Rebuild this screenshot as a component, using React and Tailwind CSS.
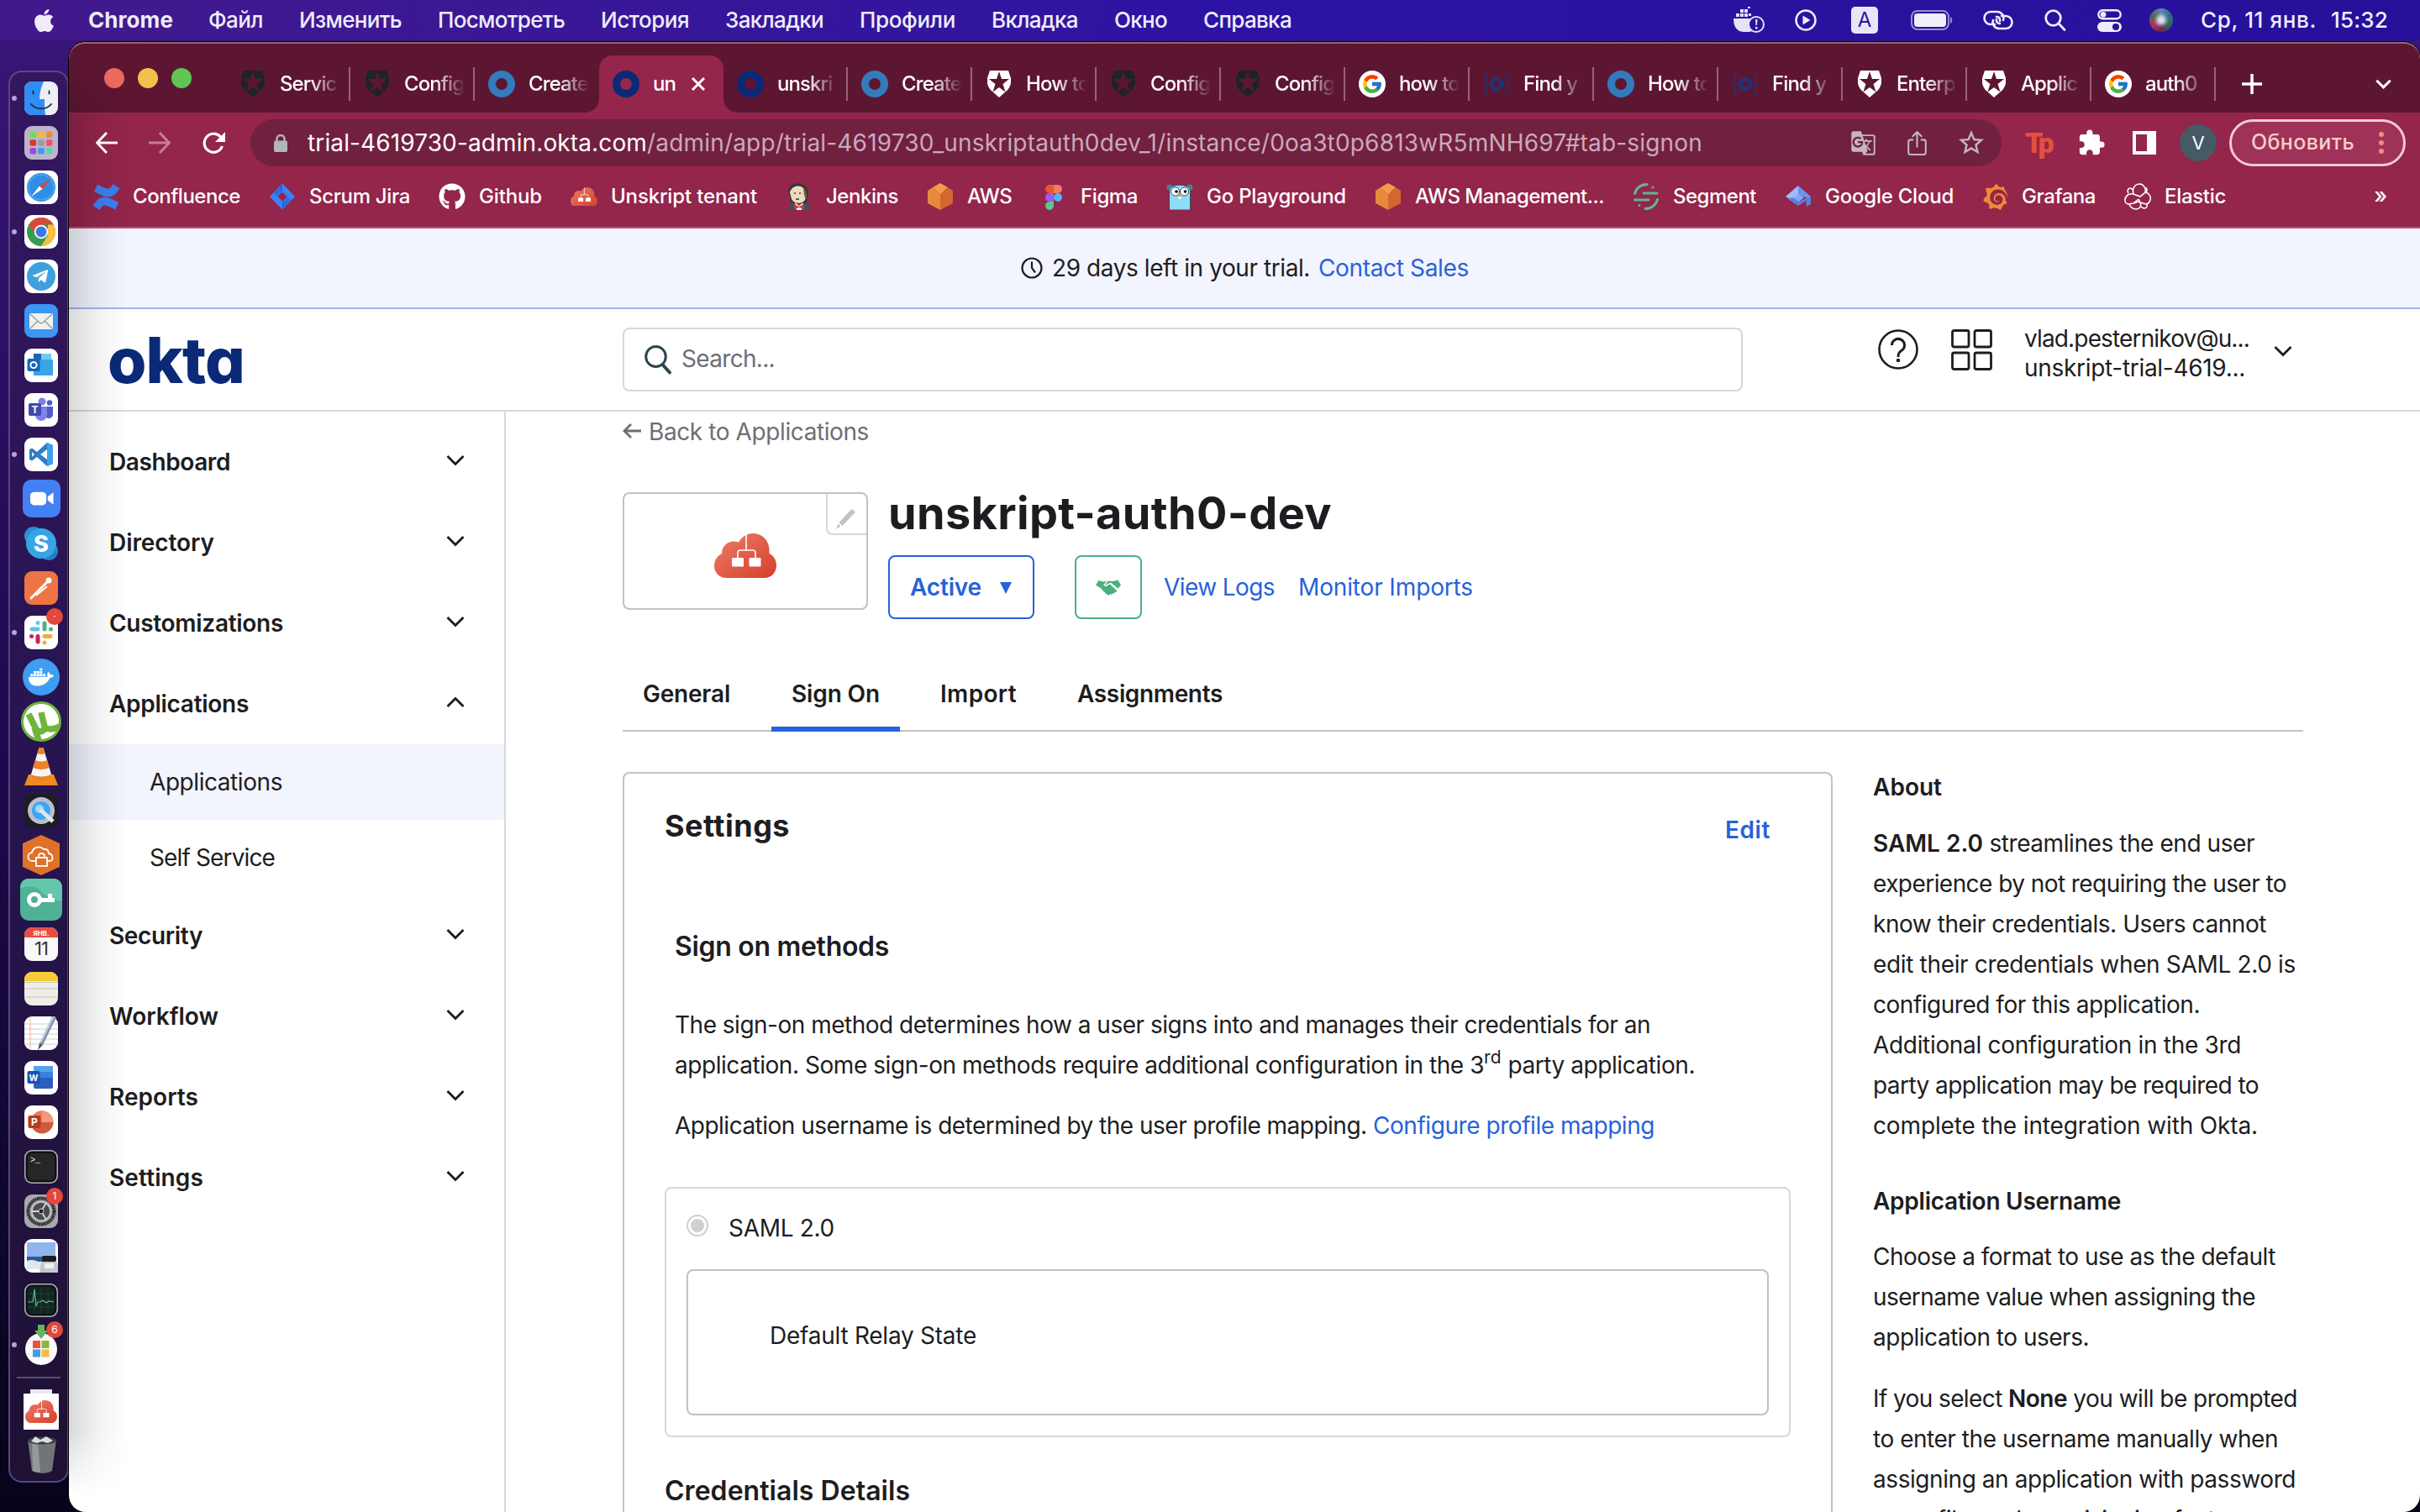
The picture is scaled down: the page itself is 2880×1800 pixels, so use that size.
import React, { useLayoutEffect, useRef, useState } from "react";
import { FaApple, FaGithub, FaDocker, FaTelegramPlane, FaSkype } from "react-icons/fa";
import { FcGoogle } from "react-icons/fc";
import { MdExtension, MdGTranslate, MdStarBorder } from "react-icons/md";
import { SiGrafana, SiConfluence } from "react-icons/si";
import { IoShareOutline } from "react-icons/io5";

/* Single-line text that tracks its letters so that the line measures `w` pixels. */
function Fit({ w, className = "", children }) {
  const ref = useRef(null);
  const [ls, setLs] = useState(0);
  useLayoutEffect(() => {
    const el = ref.current;
    const n = el.textContent.length;
    setLs((w - el.getBoundingClientRect().width) / Math.max(1, n));
  }, [w]);
  return (
    <span ref={ref} className={"inline-block whitespace-pre " + className} style={{ letterSpacing: ls + "px" }}>
      {children}
    </span>
  );
}

/* ---------- shared marks ---------- */
const Shield = ({ color }) => (
  <svg viewBox="0 0 28 32" className="h-8 w-7">
    <path fill={color} fillRule="evenodd" d="M3 0h22l3 9c1 6-1 12-6 16l-8 7-8-7C1 21-1 15 0 9zM14 1l-3 9H2l7.500 6-3 9.500L14 20l7.500 5.500-3-9.500L26 10h-9z" />
  </svg>
);
const Ring = ({ color }) => (
  <svg viewBox="0 0 32 32" className="size-8"><circle cx="16" cy="16" r="11.500" fill="none" stroke={color} strokeWidth="9" /></svg>
);
const BraceRing = () => (
  <svg viewBox="0 0 32 32" className="size-8" fill="none" stroke="#243172">
    <circle cx="16" cy="16" r="6" strokeWidth="5" />
    <path strokeWidth="1.500" d="M6 3C3 3 4 8 4 11s-1 4-3 5c2 1 3 2 3 5s-1 8 2 8M26 3c3 0 2 5 2 8s1 4 3 5c-2 1-3 2-3 5s1 8-2 8" />
  </svg>
);
const GoogleFav = () => (
  <span className="flex size-8 items-center justify-center rounded-full bg-white"><FcGoogle className="size-[26px]" /></span>
);
const Cloud = ({ className }) => (
  <svg viewBox="0 0 74 53" className={className}>
    <defs><linearGradient id="cl" x1="0" y1="0" x2="1" y2="1"><stop offset="0" stopColor="#ee7d68" /><stop offset="1" stopColor="#d43f2c" /></linearGradient></defs>
    <path fill="url(#cl)" d="M14 53C6 53 0 46.500 0 38.500 0 32 3.500 27 9 24 9 16 15 9.500 23 9.500c2 0 4 .5 6 1C33 4 39 0 46 0c11 0 19 8 19.500 19v5c5 2.500 8.500 7.500 8.500 14C74 46.500 68 53 60 53z" />
    <path stroke="#fff" strokeWidth="1.600" fill="none" d="M38 1v19M28 29v-6q0-3 3-3h15q3 0 3 3v6" />
    <rect x="21" y="29" width="14" height="10.500" rx="1" fill="#fff" /><rect x="41.500" y="29" width="14" height="10.500" rx="1" fill="#fff" />
  </svg>
);
const Chevron = ({ up, className = "w-[22px]", stroke = 3 }) => (
  <svg viewBox="0 0 22 14" className={className} fill="none" stroke="currentColor" strokeWidth={stroke}>
    <path d={up ? "M1.500 12 11 2.500 20.500 12" : "M1.500 2 11 11.500 20.500 2"} />
  </svg>
);

/* ---------- menu bar ---------- */
const menus = [["Файл", 65], ["Изменить", 122], ["Посмотреть", 151], ["История", 105], ["Закладки", 117], ["Профили", 114], ["Вкладка", 103], ["Окно", 63], ["Справка", 105]];

function MenuBar() {
  return (
    <div className="flex h-12 items-center bg-gradient-to-r from-[#42198b] via-[#2d13a3] to-[#26109a] text-[26px] leading-none text-[#efebfa]">
      <FaApple className="ml-[37px] size-[31px]" />
      <Fit w={101} className="ml-[37px] font-bold">Chrome</Fit>
      <div className="ml-[42px] flex gap-[43px] font-medium">
        {menus.map(([t, w]) => <Fit key={t} w={w}>{t}</Fit>)}
      </div>
      <div className="ml-auto flex items-center">
        <svg viewBox="0 0 38 32" className="mr-[35px] h-8 w-[38px] text-[#e6e2f5]" fill="currentColor">
          <path d="M0 14h20a11 11 0 0 0 3 15c-3 1-6 1-10 1C4 30 0 24 0 14zM3 8h4v4H3zM8 8h4v4H8zM13 8h4v4h-4zM8 3h4v4H8zM13 3h4v4h-4zM18 8h3v3h-3zM17 0h3v2h-3z" />
          <circle cx="27" cy="21" r="9" fill="none" stroke="currentColor" strokeWidth="2" />
          <path d="M26 15h2.500l-.5 7h-1.500zM26 24h2.500v2.500H26z" />
        </svg>
        <svg viewBox="0 0 26 26" className="mr-[41px] size-[26px]" fill="none" stroke="currentColor" strokeWidth="2.500"><circle cx="13" cy="13" r="11.500" /><path fill="currentColor" stroke="none" d="M9.500 7.500v11l9-5.500z" /></svg>
        <span className="mr-[39px] flex h-8 w-8 items-center justify-center rounded-[5px] bg-[#e9e5f6] text-[24px] text-[#2a129c]">A</span>
        <svg viewBox="0 0 50 24" className="mr-[36px] h-6 w-[50px]" fill="none"><rect x="1" y="1" width="44" height="22" rx="7" stroke="#9a8fd0" strokeWidth="2" /><rect x="4" y="4" width="38" height="16" rx="4" fill="#f1eefb" /><path d="M47 8c3 1 3 7 0 8z" fill="#9a8fd0" /></svg>
        <svg viewBox="0 0 36 24" className="mr-[37px] h-6 w-9" fill="none" stroke="currentColor" strokeWidth="2.600" strokeLinecap="round"><path d="M14 17H9a7.500 7.500 0 0 1 0-15h8a7.500 7.500 0 0 1 7 10M20 13a4 4 0 0 0-3-5h-1M22 7h5a7.500 7.500 0 0 1 0 15h-8a7.500 7.500 0 0 1-7-10M16 11a4 4 0 0 0 3 5h1" /></svg>
        <svg viewBox="0 0 26 26" className="mr-[37px] size-[26px]" fill="none" stroke="currentColor" strokeWidth="2.800" strokeLinecap="round"><circle cx="10.500" cy="10.500" r="8.800" /><path d="m17 17 7 7.500" /></svg>
        <svg viewBox="0 0 29 27" className="mr-[33px] h-[27px] w-[29px]"><rect x="1.300" y="1.300" width="26.400" height="10" rx="5" fill="none" stroke="currentColor" strokeWidth="2.400" /><circle cx="7" cy="6.300" r="3.400" fill="currentColor" /><rect y="15" width="29" height="12" rx="6" fill="currentColor" /><circle cx="22" cy="21" r="4" fill="#2a129c" /></svg>
        <span className="mr-[33px] flex size-7 items-center justify-center rounded-full bg-[conic-gradient(#5a86b8,#2c6f86,#246b5a,#6d2550,#b0325a,#4b6b50,#5a86b8)]"><span className="h-[12px] w-[12px] rounded-full bg-[#e8e4ef] blur-[2px]" /></span>
        <Fit w={138} className="mr-[17px] font-medium">Ср, 11 янв.</Fit>
        <Fit w={68} className="mr-[38px] font-medium">15:32</Fit>
      </div>
    </div>
  );
}

/* ---------- dock ---------- */
const I = ({ children, bg = "#fff", size = "size-10" }) => (
  <svg viewBox="0 0 40 40" className={size}><rect width="40" height="40" rx="9" fill={bg} />{children}</svg>
);
const dock = [
  { dot: 1, el: <I bg="#eceff3"><path fill="#2f8df5" d="M9 0h14c-3 7-5 13-5 21h6c0 7 0 12 1 19H9a9 9 0 0 1-9-9V9a9 9 0 0 1 9-9z" /><path stroke="#1b2a44" strokeWidth="1.800" fill="none" strokeLinecap="round" d="M10.500 11.500v3M29.500 11.500v3M8 27c6 7 18 7 24 0" /></I> },
  { el: <I bg="#bdb4cc">{["#6fe04a", "#f7b733", "#f0883a", "#d8392f", "#9b9b9f", "#f4516c", "#9a4bd8", "#3c9df0", "#5fd3a5"].map((c, i) => <rect key={i} x={6.500 + (i % 3) * 9.700} y={6.500 + Math.floor(i / 3) * 9.700} width="7.600" height="7.600" rx="2" fill={c} />)}</I> },
  { el: <I><circle cx="20" cy="20" r="17" fill="#2f8ee6" /><circle cx="20" cy="20" r="15" fill="none" stroke="#9fd0f7" strokeWidth="1.500" strokeDasharray="0.700 1.300" /><path fill="#e5432f" d="m32 9-10.500 13-3.500-3.500z" /><path fill="#fff" d="M8 31l10-12.500 3.500 3.500z" /></I> },
  { dot: 1, el: <I><circle cx="20" cy="20" r="17" fill="#3a9a4c" /><path fill="#d9493a" d="M5.300 11.500a17 17 0 0 1 29.400 0H20l-6.500 11.300z" /><path fill="#f8c043" d="M34.700 11.500A17 17 0 0 1 20 37l8-13V11.500z" /><circle cx="20" cy="20" r="8.300" fill="#fff" /><circle cx="20" cy="20" r="6.500" fill="#3b78e7" /></I> },
  { el: <I><circle cx="20" cy="20" r="17" fill="#3fa0de" /><g transform="translate(8.500 9.500)"><FaTelegramPlane size={21} color="#fff" /></g></I> },
  { el: <I bg="#3b97f2"><rect x="6" y="11" width="28" height="19" rx="2" fill="#f0f0f0" /><path d="m7 12 11 10q2 1.500 4 0l11-10M7 29l9-9M33 29l-9-9" fill="none" stroke="#9b9b9b" strokeWidth="1.300" /></I> },
  { el: <I><rect x="11" y="6" width="21" height="14" fill="#1a64b8" /><path fill="#39a4e8" d="M18 13h16v19H11V20z" /><path fill="#6dcbf6" d="M20 6h12v7H20z" /><rect x="3.500" y="12" width="15" height="15" rx="2" fill="#1566b8" /><circle cx="11" cy="19.500" r="3.600" fill="none" stroke="#fff" strokeWidth="2" /></I> },
  { el: <I><circle cx="21" cy="10" r="4.500" fill="#7b83eb" /><circle cx="30" cy="11.500" r="3.200" fill="#5059c9" /><path fill="#5059c9" d="M25 16h9v9a5 5 0 0 1-9 3z" /><path fill="#7b83eb" d="M13 16h14v10a7 7 0 0 1-14 0z" /><rect x="5" y="12" width="15" height="15" rx="2" fill="#4248a8" /><text x="12.500" y="24" fontSize="12" fontWeight="700" fill="#fff" textAnchor="middle" fontFamily="Inter">T</text></I> },
  { dot: 1, el: <I><path fill="#2b7cc9" d="M27 6 15 17l-6-4.500L6 14v12l3 1.500L15 23l12 11 7-3V9zM27 14v12l-8-6zM9 17l3 3-3 3z" fillRule="evenodd" /><path fill="#3fa0ec" d="m27 6 7 3v22l-7 3z" /></I> },
  { el: <I bg="#4380f4" size="size-[45px]"><rect x="8" y="13" width="17" height="14" rx="4" fill="#fff" /><path fill="#fff" d="m26.500 18 6-4.500v13l-6-4.500z" /></I> },
  { el: <svg viewBox="0 0 40 40" className="size-[40px]"><circle cx="11" cy="11" r="11" fill="#2c8fd6" /><circle cx="29" cy="29" r="11" fill="#2480c8" /><circle cx="20" cy="20" r="18" fill="#35a5e6" /><text x="20" y="29.500" fontSize="27" fontWeight="800" fill="#fff" textAnchor="middle" fontFamily="Inter">S</text></svg> },
  { el: <I bg="#ee7345"><path stroke="#fff" strokeWidth="3" strokeLinecap="round" fill="none" d="m8 32 9-9 9-9" /><path fill="none" stroke="#fff" strokeWidth="1.800" d="m14 29 13-11" /><circle cx="29" cy="11" r="3.500" fill="#fff" /></I> },
  { dot: 1, badge: "·", el: <I><g strokeWidth="5" strokeLinecap="round"><path stroke="#5fc5ea" d="M9 16h7M16 8.500v.1" /><path stroke="#50b183" d="M24 9v7M31.500 16h-.1" /><path stroke="#e4b041" d="M31 24.500h-7M24 32v-.1" /><path stroke="#ce2257" d="M16 31v-6.500M8.500 24.500h.1" /></g></I> },
  { el: <span className="flex size-11 items-center justify-center rounded-full bg-[#3f9df3]"><FaDocker className="size-[30px] text-white" /></span> },
  { el: <svg viewBox="0 0 48 48" className="size-12"><defs><clipPath id="ut"><circle cx="24" cy="24" r="22" /></clipPath></defs><circle cx="24" cy="24" r="22.500" fill="#fff" stroke="#6fb53c" strokeWidth="3" /><g clipPath="url(#ut)" fill="none" stroke="#6fb53c" strokeWidth="7.500"><path d="m9 15 9 18c3 5 11 3 10-3l-4-17m4 17c4 5 13 3 20-1M16 31l6 18" /></g></svg> },
  { el: <svg viewBox="0 0 40 46" className="h-[46px] w-10"><path fill="#f08a24" d="M5 33h30l5 13H0z" /><path fill="#f5f5f5" d="M17.500 1h5L33 36c-5 5-21 5-26 0z" /><path fill="#ee8224" d="M17.500 1h5l2 7q-4.500 2-9 0zM13 16q7 3 14 0l3 9q-10 4-20 0zM8 33q12 5 24 0l1 3c-5 6-21 6-26 0z" /></svg> },
  { el: <I bg="#1c1d22"><circle cx="20" cy="20" r="16" fill="#b9c0c9" /><circle cx="20" cy="20" r="11" fill="#3ea6f3" /><circle cx="18" cy="18" r="5" fill="#9adcfb" /><path stroke="#dfe4ea" strokeWidth="5" d="m19 19 15 14" /></I> },
  { el: <svg viewBox="0 0 44 48" className="h-12 w-11"><path fill="#e0712a" d="m22 0 22 10v28L22 48 0 38V10z" /><path fill="none" stroke="#fff" strokeWidth="1.800" d="M15 31h-3a5 5 0 0 1-1-10c1-6 9-9 14-4 4-1 6 2 6 5 6 1 6 9 0 9h-2" /><rect x="16" y="27" width="13" height="10" fill="none" stroke="#fff" strokeWidth="1.800" /><path fill="none" stroke="#fff" strokeWidth="1.800" d="M19 27v-2q0-3 3.500-3t3.500 3v2" /></svg> },
  { el: <svg viewBox="0 0 50 50" className="size-[50px]"><rect width="50" height="50" rx="10" fill="#4fb297" /><path fill="#63c7ab" d="M0 12C14 6 20 10 26 16s16 12 24 10V10A10 10 0 0 0 40 0H10A10 10 0 0 0 0 10z" /><circle cx="17" cy="25" r="6.500" fill="none" stroke="#fff" strokeWidth="5" /><path fill="#fff" d="M24 23h17v5H24zM33 18h5v6h-5z" /></svg> },
  { el: <I bg="#f8f8f8"><path fill="#ea4d43" d="M9 0h22a9 9 0 0 1 9 9v3H0V9a9 9 0 0 1 9-9z" /><text x="20" y="9.500" fontSize="8" fontWeight="700" fill="#fff" textAnchor="middle" fontFamily="Inter">ЯНВ.</text><text x="20" y="33" fontSize="22" fill="#333" textAnchor="middle" fontFamily="Inter" letterSpacing="-1">11</text></I> },
  { el: <I bg="#efede8"><path fill="#f7cc38" d="M9 0h22a9 9 0 0 1 9 9v2H0V9a9 9 0 0 1 9-9z" /><path stroke="#c9c6bd" d="M0 12.500h40M0 20h40M0 30h40" /></I> },
  { el: <I><path stroke="#cfcfcf" d="M0 9h40M0 15h40M0 21h40M0 27h40M0 33h40" /><path stroke="#f3b0a8" d="M7 0v40" /><path stroke="#7e93a8" strokeWidth="4.500" d="M36 0 20 33" /><path stroke="#cfdbe6" strokeWidth="1.500" d="M35 0 19.500 31" /><path fill="#555" d="m18 32 4 2-6 6z" /></I> },
  { el: <I><rect x="11" y="6" width="23" height="27" rx="2" fill="#2a5fc0" /><path fill="#57a4ea" d="M11 6h23v7H11z" /><path fill="#3a80dc" d="M11 13h23v7H11z" /><rect x="3.500" y="12" width="15" height="15" rx="2" fill="#1a54b0" /><text x="11" y="23.500" fontSize="10.500" fontWeight="700" fill="#fff" textAnchor="middle" fontFamily="Inter">W</text></I> },
  { el: <I><circle cx="21" cy="20" r="13.500" fill="#cd5b3c" /><path fill="#f09a7b" d="M21 6.500A13.500 13.500 0 0 1 34.500 20H21z" /><path fill="#ee7a55" d="M21 6.500V20H8A13.500 13.500 0 0 1 21 6.500z" /><rect x="4.500" y="12" width="15" height="15" rx="2" fill="#b83b22" /><text x="12" y="24" fontSize="12" fontWeight="700" fill="#fff" textAnchor="middle" fontFamily="Inter">P</text></I> },
  { el: <I bg="#a9b2b8"><rect x="1.500" y="1.500" width="37" height="37" rx="8" fill="#111" /><rect x="4" y="4" width="32" height="32" rx="5" fill="#262626" /><text x="7" y="14.500" fontSize="10" fill="#eee" fontFamily="Liberation Mono">{">_"}</text></I> },
  { badge: "1", el: <I bg="#a8a9ab"><circle cx="20" cy="20" r="15.500" fill="none" stroke="#2b2b2d" strokeWidth="4" strokeDasharray="2 0.500" /><circle cx="20" cy="20" r="11" fill="#4b4c4f" stroke="#c7c8ca" strokeWidth="1.500" /><path stroke="#d5d6d8" strokeWidth="1.800" d="M20 20 9 20M20 20l6-10M20 20l6 10" /><circle cx="20" cy="20" r="3" fill="#222" stroke="#ccc" /></I> },
  { el: <I><path fill="#8fb4ee" d="M3 4h34v18H3z" /><path fill="#2a5a9a" d="M3 21h34v6H3z" /><path fill="#dfe8ee" d="M3 26q8-3 17 3v7H3z" /><rect x="21" y="20" width="17" height="7" rx="2" fill="#1c1d20" /><path fill="#c3c8cc" d="M20 27h19l2 13H18z" /><rect x="24" y="29" width="11" height="6" fill="#eef1f3" /></I> },
  { el: <I bg="#a7b3b8"><rect x="1.500" y="1.500" width="37" height="37" rx="8" fill="#0e1212" /><rect x="4" y="4" width="32" height="32" rx="5" fill="#132421" /><path stroke="#2a4a43" strokeWidth=".7" d="M4 12h32M4 20h32M4 28h32M12 4v32M20 4v32M28 4v32" /><path fill="none" stroke="#5bb694" strokeWidth="1.200" d="M4 22h6l2-15 2 20 2-5h3l3-2 4 3 3-2 6 1" /></I> },
  { dot: 1, badge: "6", el: <svg viewBox="0 0 40 48" className="h-12 w-10"><circle cx="20" cy="29" r="19" fill="#fafafa" /><path fill="#e8553b" d="M10 19h9v9h-9z" /><path fill="#8cb93c" d="M20.500 19h9v9h-9z" /><path fill="#3f9fe4" d="M10 29.500h9v9h-9z" /><path fill="#f6bb42" d="M20.500 29.500h9v9h-9z" /><path fill="#63b558" d="M16 0h8v7h4l-8 10-8-10h4z" /></svg> },
];

function Dock() {
  return (
    <div className="w-[82px] shrink-0 pl-[10px] pt-[36px]">
      <div className="flex h-[1681px] flex-col rounded-[16px] border-2 border-[#5b4580] bg-gradient-to-b from-[#33175f] via-[#271450] to-[#1e1133] pt-[4px]">
        {dock.map((d, i) => (
          <div key={i} className="relative flex h-[53.040px] shrink-0 items-center">
            <span className={"ml-[2px] size-[6px] shrink-0 rounded-full " + (d.dot ? "bg-[#b9a0e0]" : "")} />
            <span className="ml-[-1px] flex w-[60px] justify-center">{d.el}</span>
            {d.badge && <span className="absolute left-[43px] top-[-2px] flex size-5 items-center justify-center rounded-full bg-[#e2483b] text-[12px] text-white">{d.badge}</span>}
          </div>
        ))}
        <div className="ml-2 mt-[11px] h-[2px] w-[52px] shrink-0 bg-[#594c70]" />
        <div className="ml-[16px] mt-[13px] flex h-12 w-[42px] flex-col">
          <span className="mx-auto h-[5px] w-[26px] bg-[#e8e8ee]" />
          <span className="flex h-[43px] items-center justify-center bg-white"><Cloud className="w-[38px]" /></span>
        </div>
        <svg viewBox="0 0 36 46" className="ml-[20px] mt-[7px] h-[46px] w-9"><path fill="#717577" d="M1 5h34l-5 37q-10 6-24 0z" /><path fill="#94989a" d="M6 6h7l3 38q-6 0-9-2z" /><ellipse cx="18" cy="6" rx="17" ry="4.500" fill="#3c3e40" /><path fill="#d9dcde" d="m5 7 5-6 6 4 7-4 8 5-6 3-7-2-6 2z" /></svg>
      </div>
    </div>
  );
}

/* ---------- browser chrome ---------- */
const dark = <Shield color="#1f222b" />;
const light = <Shield color="#fff" />;
const tabs = [["Servic", dark], ["Config", dark], ["Create", <Ring color="#327bbd" />], ["un", <Ring color="#0a2a78" />, 1], ["unskri", <Ring color="#0a2a78" />], ["Create", <Ring color="#327bbd" />], ["How to", light], ["Config", dark], ["Config", dark], ["how to", <GoogleFav />], ["Find y", <BraceRing />], ["How to", <Ring color="#327bbd" />], ["Find y", <BraceRing />], ["Enterp", light], ["Applic", light], ["auth0", <GoogleFav />]];

function TabStrip() {
  return (
    <div className="flex h-[84px] items-end bg-[#5d1631] text-white">
      <div className="mb-[29px] ml-[42px] flex gap-4">
        <span className="size-6 rounded-full bg-[#ec6a5e]" /><span className="size-6 rounded-full bg-[#f4bf4f]" /><span className="size-6 rounded-full bg-[#61c554]" />
      </div>
      <div className="ml-[41px] flex items-end">
        {tabs.map(([t, ic, active], i) => (
          <div key={i} className={"relative flex h-[68px] w-[148px] items-center pl-4 " + (active ? "rounded-t-[16px] bg-[#94254b]" : "")}>
            <span className="flex w-8 shrink-0 justify-center">{ic}</span>
            <span className={"ml-4 overflow-hidden whitespace-nowrap text-[24px] font-medium tracking-[-0.9px] " + (active ? "w-[28px]" : "w-[72px] [mask-image:linear-gradient(to_right,#000_50%,transparent)]")}>{t}</span>
            {active && <svg viewBox="0 0 16 16" className="ml-[18px] size-4" stroke="#fff" strokeWidth="3"><path d="m1 1 14 14M15 1 1 15" /></svg>}
            {active && <><span className="absolute -left-4 bottom-0 size-4 bg-[radial-gradient(circle_at_0_0,#5d1631_15.500px,#94254b_16px)]" /><span className="absolute -right-4 bottom-0 size-4 bg-[radial-gradient(circle_at_100%_0,#5d1631_15.500px,#94254b_16px)]" /></>}
            {!active && i !== 2 && <span className="absolute right-0 top-[14px] h-10 w-[2px] bg-[#97627a]" />}
          </div>
        ))}
      </div>
      <svg viewBox="0 0 24 24" className="mb-[22px] ml-[31px] size-6" stroke="#fff" strokeWidth="3.500"><path d="M12 0v24M0 12h24" /></svg>
      <Chevron className="mb-[28px] ml-[135px] w-[19px]" stroke={3.500} />
    </div>
  );
}

const Jira = () => <svg viewBox="0 0 32 32" className="size-8"><path fill="#3b82f7" fillRule="evenodd" d="M16 0.500 31 16 16 31.500 1 16zM16 10.500 10.500 16l5.500 5.500 5.500-5.500z" /><path fill="#2462d4" d="M16 .5v10c-3-2-4-6 0-10zM16 31.500v-10c3 2 4 6 0 10z" /><path fill="#2462d4" d="m10.500 16 5.500-5.500c-2-2-3-4-3-6.500L5 12zM21.500 16 16 21.500c2 2 3 4 3 6.500l8-8z" opacity=".6" /></svg>;
const Jenkins = () => <svg viewBox="0 0 32 32" className="size-8"><path fill="#33363b" d="M3 9C6-3 25-3 27 11l-2 13H7z" /><path fill="#efd9bd" d="M5 11C7 2 20 1 23 9l1 9c-2 7-14 8-17 1z" /><path fill="#6b5a4a" d="M21 6c4 2 5 8 3 14l-2-6z" /><path fill="#3a5166" d="m2 32 5-9 9 3 9-3 5 9z" /><path fill="#f3f3f3" d="m11 23 5 4 5-4-2 9h-6z" /><path fill="#d33833" d="m10 25 6 3 6-3v6l-6-2-6 2z" /><path stroke="#333" strokeWidth="1.300" d="M10 12h2M16 12h2M12 19h4" /></svg>;
const Aws = () => <svg viewBox="0 0 32 32" className="size-8"><path fill="#f39c45" d="m16 0 9 5-9 9-9-9z" /><path fill="#e78a3c" d="M7 5 1 9v15l15 8V14z" /><path fill="#d4662f" d="m25 5 6 4v15l-15 8V14z" /></svg>;
const Figma = () => <svg viewBox="0 0 32 32" className="size-8"><path fill="#e9572f" d="M16 2h-5a5 5 0 0 0 0 10h5z" /><path fill="#f47a66" d="M16 2h5a5 5 0 0 1 0 10h-5z" /><path fill="#9c5bf6" d="M16 12h-5a5 5 0 0 0 0 10h5z" /><circle cx="21" cy="17" r="5" fill="#4eb4f5" /><path fill="#55cb84" d="M16 22h-5a5 5 0 1 0 5 5z" /></svg>;
const Gopher = () => <svg viewBox="0 0 32 32" className="size-8"><circle cx="4" cy="5" r="3.500" fill="#4b8298" /><circle cx="28" cy="5" r="3.500" fill="#4b8298" /><path fill="#8ddcf8" stroke="#2f4f5c" strokeWidth="1" d="M3.500 32V9c0-9 25-9 25 0v23z" /><circle cx="10.500" cy="10" r="5" fill="#fff" stroke="#2f4f5c" /><circle cx="21.500" cy="10" r="5" fill="#fff" stroke="#2f4f5c" /><circle cx="12" cy="10" r="1.800" /><circle cx="22.500" cy="10" r="1.800" /><ellipse cx="16" cy="14.500" rx="3" ry="1.800" fill="#c9a27a" /><path fill="#fff" d="M14.500 16h3v3h-3z" /></svg>;
const Segment = () => <svg viewBox="0 0 32 32" className="size-8" fill="none" stroke="#5fb890" strokeWidth="3" strokeLinecap="round"><path d="M13 12h16M2.500 20H19M2.500 12.500C4 6 10 1.500 17 1.500M29.500 19.500C28 26 22 30.500 15 30.500" /><path d="M24 5v.1M8 26.500v.1" /></svg>;
const GCloud = () => <svg viewBox="0 0 32 32" className="size-8"><path fill="#9dbcfa" d="M16 3 1 16l7 4 8-6z" /><path fill="#6c93ec" d="m16 3 15 13-3 2-12-4z" /><path fill="#86a9f6" d="m16 13 7 4-7 6-8-4z" /><path fill="#5c80dd" d="m4 19 12 8v-6l-7-4zM16 27l9-6v-3l-9 5zM25 17l6-1v9l-5 3z" /></svg>;
const Elastic = () => <svg viewBox="0 0 32 32" className="size-8" fill="none" stroke="#fff" strokeWidth="1.600"><path d="M11 13C9 6 13 1 18 1s8 5 7 10l-6 5zM11 13l8 3 6-5c5 1 7 5 6 9s-5 5-5 5l-7-2-2-4M11 13c-4-1-9 1-10 6s4 6 4 6l6-1 6-5M5 12c-2-3 0-6 2-6s3 2 3 2M26 11c2-2 1-4 0-6M11 24l6-2 2 1c2 5-1 8-5 8s-7-3-8-6M27 25c1 3-1 5-3 5s-4-2-4-2" /></svg>;
const bookmarks = [["Confluence", 128, 34, <SiConfluence className="size-[31px] text-[#3b7ff0]" />], ["Scrum Jira", 120, 34, <Jira />], ["Github", 75, 34, <FaGithub className="size-8" />], ["Unskript tenant", 174, 34, <Cloud className="w-8" />], ["Jenkins", 86, 34, <Jenkins />], ["AWS", 53, 34, <Aws />], ["Figma", 68, 34, <Figma />], ["Go Playground", 166, 34, <Gopher />], ["AWS Management...", 225, 34, <Aws />], ["Segment", 99, 34, <Segment />], ["Google Cloud", 153, 33, <GCloud />], ["Grafana", 88, 34, <SiGrafana className="size-[31px] text-[#f08a36]" />], ["Elastic", 73, 0, <Elastic />]];

function Toolbar() {
  return (
    <div className="h-[138px] border-b-2 border-[#b25377] bg-[#94254b] pt-2 text-white">
      <div className="flex h-14 items-center">
        <svg viewBox="0 0 26 26" className="ml-8 size-[26px]" fill="none" stroke="#fff" strokeWidth="3"><path d="M26 13H2M13 1 1.500 13 13 25" /></svg>
        <svg viewBox="0 0 26 26" className="ml-[37px] size-[26px]" fill="none" stroke="#c77f98" strokeWidth="3"><path d="M0 13h24M13 1l11.500 12L13 25" /></svg>
        <svg viewBox="0 0 27 27" className="ml-[38px] size-[27px]" fill="none" stroke="#fff" strokeWidth="3.200"><path d="M23.500 17A11 11 0 1 1 21 5.500L23.500 8" /><path fill="#fff" stroke="none" d="M27 0v12H15z" /></svg>
        <div className="ml-[30px] flex h-14 w-[2084px] items-center rounded-full bg-[#712040] text-[28px]">
          <svg viewBox="0 0 16 21" className="ml-7 h-[21px] w-4"><rect y="7.500" width="16" height="13.500" rx="2" fill="#b3b5ba" /><path fill="none" stroke="#b3b5ba" strokeWidth="2.400" d="M3.500 8V5a4.500 4 0 0 1 9 0v3" /></svg>
          <Fit w={404} className="ml-6">trial-4619730-admin.okta.com</Fit>
          <Fit w={1256} className="text-[#cba9b8]">/admin/app/trial-4619730_unskriptauth0dev_1/instance/0oa3t0p6813wR5mNH697#tab-signon</Fit>
          <div className="ml-auto mr-[18px] flex items-center text-[#c3b6bf]">
            <MdGTranslate className="size-[31px]" />
            <IoShareOutline className="ml-[32px] size-[33px]" />
            <MdStarBorder className="ml-[30px] size-[36px]" />
          </div>
        </div>
        <Fit w={30} className="ml-[28px] font-[Roboto] text-[34px] leading-none font-black text-[#e2503f]">Tp</Fit>
        <MdExtension className="ml-[32px] size-[34px]" />
        <span className="ml-[32px] h-7 w-7 border-4 border-r-[11px] border-white" />
        <span className="ml-[28px] flex size-11 items-center justify-center rounded-full bg-[#455a64] text-[22px]">V</span>
        <div className="ml-[15px] flex h-14 w-[210px] items-center rounded-full border-[3px] border-[#f3cbc9] bg-[#9e3259] text-[25px] text-[#f8cdc8]">
          <Fit w={123} className="ml-[23px] font-medium">Обновить</Fit>
          <span className="ml-[29px] flex flex-col gap-1"><i className="size-[6px] rounded-full bg-[#ee8f84]" /><i className="size-[6px] rounded-full bg-[#ee8f84]" /><i className="size-[6px] rounded-full bg-[#ee8f84]" /></span>
        </div>
      </div>
      <div className="flex h-[72px] items-center text-[24px] font-medium">
        <div className="ml-[28px] flex">
          {bookmarks.map(([t, w, gap, ic]) => (
            <div key={t} className="flex items-center">
              <span className="flex w-8 justify-center">{ic}</span>
              <Fit w={w} className="ml-4 shrink-0">{t}</Fit>
              <span className="shrink-0" style={{ width: gap }} />
            </div>
          ))}
        </div>
        <span className="ml-auto mr-[39px] pb-1 text-[26px]">»</span>
      </div>
    </div>
  );
}

/* ---------- admin page ---------- */
const nav = [["Dashboard", 144], ["Directory", 125], ["Customizations", 207], ["Applications", 166, [["Applications", 158, 1], ["Self Service", 149]]], ["Security", 111], ["Workflow", 130], ["Reports", 106], ["Settings", 112]];

function Sidebar() {
  return (
    <div className="w-[520px] shrink-0 border-r-2 border-[#d7d7dc] pt-3">
      {nav.map(([t, w, kids]) => (
        <React.Fragment key={t}>
          <div className="flex h-24 items-center justify-between pl-12 pr-[47px] font-semibold">
            <Fit w={w}>{t}</Fit>
            <Chevron up={!!kids} className="mb-[5px] w-[22px]" stroke={2.800} />
          </div>
          {kids && kids.map(([k, kw, on]) => (
            <div key={k} className={"flex h-[90px] items-center pl-24 " + (on ? "bg-[#f2f4fe]" : "")}><Fit w={kw}>{k}</Fit></div>
          ))}
        </React.Fragment>
      ))}
    </div>
  );
}

function Header() {
  return (
    <div className="flex h-[122px] items-start border-b-2 border-[#d7d7dc]">
      <Fit w={163} className="ml-[46px] mt-[14px] text-[75px] leading-[94px] font-extrabold text-[#0a2a78] [font-feature-settings:'cv11']">okta</Fit>
      <div className="ml-[450px] mt-[22px] flex h-[76px] w-[1333px] items-center rounded-[8px] border-2 border-[#d7d7dc] pl-[24px] text-[#6e6e78]">
        <svg viewBox="0 0 33 36" className="mt-[2px] h-9 w-[33px]" fill="none" stroke="#2f4450" strokeWidth="3" strokeLinecap="round"><ellipse cx="13.500" cy="13.500" rx="11.800" ry="12" /><path strokeWidth="4" d="m21.500 23 8.500 9.500" /></svg>
        <Fit w={111} className="ml-[11px] -mt-[2px]">Search...</Fit>
      </div>
      <svg viewBox="0 0 48 48" className="ml-[161px] mt-6 size-12" fill="none" stroke="#1d1d21" strokeWidth="2.600"><circle cx="24" cy="24" r="22.500" /><path strokeWidth="3" d="M16.500 19a7.500 7.500 0 1 1 11.500 6.300c-2.500 1.700-4 3-4 7.700" /><circle cx="24" cy="37" r="1" fill="#1d1d21" /></svg>
      <svg viewBox="0 0 49 49" className="ml-[39px] mt-6 size-[49px]" fill="none" stroke="#1d1d21" strokeWidth="2.800"><rect x="1.500" y="1.500" width="19.500" height="19.500" rx="2" /><rect x="28" y="1.500" width="19.500" height="19.500" rx="2" /><rect x="1.500" y="28" width="19.500" height="19.500" rx="2" /><rect x="28" y="28" width="19.500" height="19.500" rx="2" /></svg>
      <div className="ml-[38px] mt-[18px] flex w-[270px] flex-col items-start leading-[35px]"><Fit w={268}>vlad.pesternikov@u...</Fit><Fit w={263}>unskript-trial-4619...</Fit></div>
      <Chevron className="ml-[27px] mt-[43px] w-[22px]" stroke={2.800} />
    </div>
  );
}

const L = ({ children }) => <div className="flex h-12 items-center whitespace-pre">{children}</div>;
const blue = "text-[#2762d9]";

function Aside() {
  return (
    <div className="ml-12 w-[520px]">
      <div className="h-9 leading-9 font-semibold"><Fit w={82}>About</Fit></div>
      <div className="mt-[25px]">
        <L><Fit w={131} className="font-semibold">SAML 2.0</Fit><Fit w={323}> streamlines the end user</Fit></L>
        <L><Fit w={492}>experience by not requiring the user to</Fit></L>
        <L><Fit w={468}>know their credentials. Users cannot</Fit></L>
        <L><Fit w={503}>edit their credentials when SAML 2.0 is</Fit></L>
        <L><Fit w={389}>configured for this application.</Fit></L>
        <L><Fit w={438}>Additional configuration in the 3rd</Fit></L>
        <L><Fit w={459}>party application may be required to</Fit></L>
        <L><Fit w={458}>complete the integration with Okta.</Fit></L>
      </div>
      <div className="mt-12 h-9 leading-9 font-semibold"><Fit w={295}>Application Username</Fit></div>
      <div className="mt-6">
        <L><Fit w={479}>Choose a format to use as the default</Fit></L>
        <L><Fit w={455}>username value when assigning the</Fit></L>
        <L><Fit w={257}>application to users.</Fit></L>
      </div>
      <div className="mt-[25px]">
        <L><Fit w={161}>If you select </Fit><Fit w={70} className="font-semibold">None</Fit><Fit w={274}> you will be prompted</Fit></L>
        <L><Fit w={482}>to enter the username manually when</Fit></L>
        <L><Fit w={503}>assigning an application with password</Fit></L>
        <L><Fit w={471}>or profile push provisioning features.</Fit></L>
      </div>
    </div>
  );
}

function Content() {
  return (
    <div className="flex-1 pl-[139px]">
      <div className="flex h-12 items-center text-[#6e6e78]">
        <svg viewBox="0 0 22 20" className="h-5 w-[22px]" fill="none" stroke="currentColor" strokeWidth="2.800"><path d="M22 9H2M10 1 2 9l8 8" /></svg>
        <Fit w={262} className="ml-[9px] -mt-[1px]">Back to Applications</Fit>
      </div>
      <div className="mt-12 flex h-[151px] items-start">
        <div className="relative flex h-[140px] w-[292px] items-center justify-center rounded-[8px] border-2 border-[#c1c1c8]">
          <Cloud className="mt-[10px] w-[74px]" />
          <div className="absolute right-0 top-0 flex h-[49px] w-[48px] items-center justify-center rounded-bl-[8px] border-b-2 border-l-2 border-[#d7d7dc]">
            <svg viewBox="0 0 24 24" className="mr-1 mt-3 size-6" fill="#c1c1c8"><path d="M19.500 0 24 3.500 8.500 20 4.500 16zM3.500 17.500l3 3L1 24z" /></svg>
          </div>
        </div>
        <div className="ml-[24px]">
          <div className="flex h-[50px] items-center"><Fit w={528} className="text-[54px] leading-[50px] font-bold">unskript-auth0-dev</Fit></div>
          <div className="mt-[25px] flex h-[76px] items-center">
            <div className={"flex h-[76px] w-[174px] items-center rounded-[8px] border-2 border-[#2762d9] pl-[24px] font-semibold " + blue}>
              <Fit w={85}>Active</Fit>
              <svg viewBox="0 0 14 14" className="ml-[22px] mt-[2px] size-[14px]"><path fill="currentColor" d="M0 0h14L7 14z" /></svg>
            </div>
            <div className="ml-[48px] flex h-[76px] w-20 items-center justify-center rounded-[8px] border-2 border-[#4cb07e]">
              <svg viewBox="0 0 30 19" className="h-[19px] w-[30px]">
                <path fill="#4cb07e" d="M3.500 1 9 2.500 13.500 1.500 9.500 6.500c1.500 2 4 1.500 5.500-.5l2-.5 8 7.500c.5 1.500-1 2.500-2.200 1.500.3 1.600-1.300 2.600-2.600 1.600.1 1.500-1.600 2.200-2.700 1.200L16 18.500c-1.500.5-2.500-.5-2.500-1.500-1.500.5-2.800-.8-2.300-2-1.500.3-2.700-1-2.200-2.200-1.300.2-2.400-.8-2.200-2L4 9 0 6.500z" />
                <path fill="#4cb07e" d="M15 1.500 20.500 2 26.500.5 30 6.500l-3.500 4.200L18 4l-3.500 1c-1 1.200-2 1.500-3 1z" />
                <path fill="none" stroke="#fff" strokeWidth=".9" d="m9.500 6.700 4-4.700M11 7c2 .5 3.500-.5 4.500-2l2.500-.8 8 6.500" />
              </svg>
            </div>
            <Fit w={132} className={"ml-[26px] " + blue}>View Logs</Fit>
            <Fit w={208} className={"ml-[28px] " + blue}>Monitor Imports</Fit>
          </div>
        </div>
      </div>
      <div className="mt-[44px] flex h-[90px] w-[2000px] gap-6 border-b-2 border-[#c1c1c8] font-semibold leading-[90px]">
        <div className="px-6"><Fit w={104}>General</Fit></div>
        <div className="ml-[1px] h-[90px] border-b-[6px] border-[#2762d9] px-6"><Fit w={105}>Sign On</Fit></div>
        <div className="px-6"><Fit w={91}>Import</Fit></div>
        <div className="px-6"><Fit w={173}>Assignments</Fit></div>
      </div>
      <div className="mt-12 flex items-start">
        <div className="h-[1000px] w-[1440px] rounded-[8px] border-2 border-[#c1c1c8] px-12 pt-[44px]">
          <div className="flex h-9 items-center justify-between pr-[24px]">
            <Fit w={149} className="text-[36px] font-bold">Settings</Fit>
            <Fit w={54} className={"mt-[10px] font-semibold " + blue}>Edit</Fit>
          </div>
          <div className="ml-3 mt-[108px] flex h-9 items-center text-[32px] font-semibold"><Fit w={255}>Sign on methods</Fit></div>
          <div className="ml-3 mt-[51px]">
            <L><Fit w={1161}>The sign-on method determines how a user signs into and manages their credentials for an</Fit></L>
            <L><Fit w={963}>application. Some sign-on methods require additional configuration in the 3</Fit><Fit w={21} className="-mt-[18px] text-[21px]">rd</Fit><Fit w={230}> party application.</Fit></L>
          </div>
          <div className="ml-3 mt-6"><L><Fit w={831}>Application username is determined by the user profile mapping. </Fit><Fit w={335} className={blue}>Configure profile mapping</Fit></L></div>
          <div className="mt-[49px] h-[298px] w-[1340px] rounded-[8px] border-2 border-[#d7d7dc] px-6 pt-[29px]">
            <div className="flex h-9 items-center">
              <span className="mb-[6px] flex size-[26px] items-center justify-center rounded-full border-2 border-[#cfcfcf]"><span className="size-4 rounded-full bg-[#d0d0d0]" /></span>
              <Fit w={126} className="ml-6">SAML 2.0</Fit>
            </div>
            <div className="mt-[31px] h-[174px] rounded-[8px] border-2 border-[#c1c1c8] pl-[97px] pt-[59px] leading-9"><Fit w={246}>Default Relay State</Fit></div>
          </div>
          <div className="mt-[44px] flex h-10 items-center text-[32px] font-semibold"><Fit w={292}>Credentials Details</Fit></div>
        </div>
        <Aside />
      </div>
    </div>
  );
}

export default function App() {
  return (
    <div className="flex h-[1800px] w-[2880px] flex-col overflow-hidden bg-gradient-to-b from-[#3a1579] via-[#1d0a4e] to-[#07041a] font-['Inter','Liberation_Sans',sans-serif]">
      <MenuBar />
      <div className="flex h-[1752px]">
        <Dock />
        <div className="relative mt-[2px] flex h-[1750px] flex-1 flex-col overflow-hidden rounded-[20px] bg-white text-[28px] text-[#1d1d21] shadow-[0_0_0_1px_#000]">
          <TabStrip />
          <Toolbar />
          <div className="flex h-24 shrink-0 items-center border-b-2 border-[#a7b5ea] bg-[#f2f4fe] pl-[1133px]">
            <svg viewBox="0 0 26 26" className="mr-[11px] size-[26px]" fill="none" stroke="#1d1d21" strokeWidth="2.200"><circle cx="13" cy="13" r="11.500" /><path d="M13 5.500V13l4 5.500" /></svg>
            <Fit w={307} className="-mt-[1px]">29 days left in your trial.</Fit>
            <Fit w={179} className={"ml-[10px] -mt-[1px] " + blue}>Contact Sales</Fit>
          </div>
          <Header />
          <div className="flex h-[1310px] overflow-hidden"><Sidebar /><Content /></div>
          <div className="pointer-events-none absolute left-0 top-[30px] h-[1700px] w-[70px] bg-gradient-to-r from-black/15 via-black/5 to-transparent [mask-image:linear-gradient(to_bottom,transparent,#000_60px,#000_1620px,transparent)]" />
          <div className="pointer-events-none absolute inset-0 rounded-[20px] border-t-2 border-white/35" />
        </div>
      </div>
    </div>
  );
}
